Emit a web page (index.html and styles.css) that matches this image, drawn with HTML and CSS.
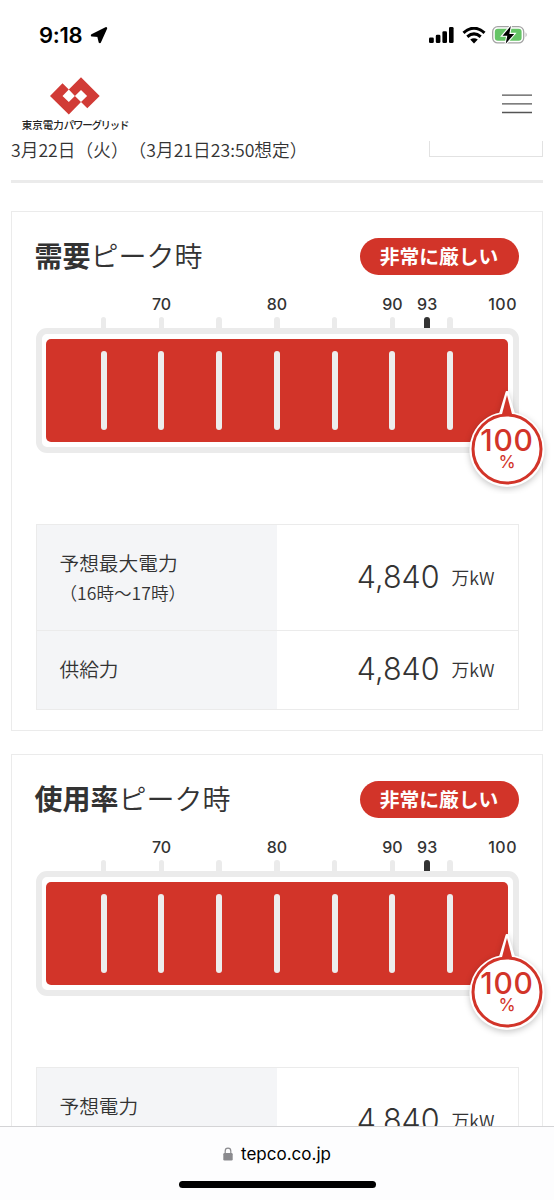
FILE: index.html
```html
<!DOCTYPE html>
<html lang="ja">
<head>
  <meta charset="UTF-8" />
  <meta name="viewport" content="width=device-width, initial-scale=1.0" />
  <title>東京電力パワーグリッド</title>
  <link rel="stylesheet" href="styles.css">
</head>
<body>
  <div class="status">
    <span class="time">9:18</span>
    <svg class="arrow" width="18" height="18" viewBox="0 0 18 18"><path d="M2 9.300 16 2.200 9.800 16 8.300 9.800z" stroke="#000" stroke-width="2.400" stroke-linejoin="round"/></svg>
    <svg class="signal" width="25" height="17" viewBox="0 0 25 17">
      <rect x="0" y="10.500" width="4.800" height="5.500" rx="1.300"/>
      <rect x="6.800" y="7.700" width="4.600" height="8.300" rx="1.300"/>
      <rect x="13.400" y="4.200" width="4.600" height="11.800" rx="1.300"/>
      <rect x="20" y="0" width="4.600" height="16" rx="1.300"/>
    </svg>
    <svg class="wifi" width="24" height="17" viewBox="0 0 24 17">
      <path d="M1.500 5.800Q12-3.300 22.500 5.800M5.300 9.700Q12 4.100 18.700 9.700" fill="none" stroke="#000" stroke-width="3.100"/>
      <path d="M8.200 12.500Q12 9.900 15.800 12.500L12 16.500z"/>
    </svg>
    <svg class="battery" width="37" height="20" viewBox="0 0 37 20">
      <rect x=".7" y="1.700" width="31" height="16.200" rx="5" fill="none" stroke="#a4a4a4" stroke-width="1.300"/>
      <rect x="2.800" y="3.800" width="26.800" height="12" rx="3" fill="#65c466"/>
      <path d="M33.600 7.300q2 2.400 0 4.900z" fill="#a4a4a4"/>
      <path d="M18.800 1 10.500 10.700h4.800L13.700 18.800 22.200 8.900h-4.900z" stroke="#fff" stroke-width="2.200" paint-order="stroke"/>
    </svg>
  </div>

  <header class="header">
    <div class="logo">
      <svg width="50" height="38" viewBox="0 0 50 38">
        <path fill="#d13b36" fill-rule="evenodd" d="M0 19 12.500 6.300 18.800 12.500 31 .3 49.700 19 37.300 31.300 31 25.100 18.800 37.500zM18.800 12.500 12.500 19 18.800 25.100 24.900 19zM31 12.900 24.900 19 31 25.100 37.100 19z"/>
      </svg>
      <p class="logo-text"><span class="kanji">東京電力</span>パワーグリッド</p>
    </div>
    <svg class="menu" width="30" height="20" viewBox="0 0 30 20"><path d="M0 1.200h30M0 9.900h30M0 18.500h30" stroke="#555" stroke-width="1.300"/></svg>
  </header>

  <main class="content">
    <div class="date-row">
      <p>3月22日（火）（3月21日23:50想定）</p>
      <div class="select"></div>
    </div>

    <section class="card">
      <div class="card-head">
        <h2><b>需要</b>ピーク時</h2>
        <span class="pill">非常に厳しい</span>
      </div>
      <div class="scale labels">
        <span class="p70">70</span><span class="p80">80</span><span class="p90">90</span><span class="p93">93</span><span class="p100">100</span>
      </div>
      <div class="scale ticks">
        <i class="p65"></i><i class="p70"></i><i class="p75"></i><i class="p80"></i><i class="p85"></i><i class="p90"></i><i class="p93"></i><i class="p95"></i>
      </div>
      <div class="meter">
        <div class="bar scale">
          <i class="p65"></i><i class="p70"></i><i class="p75"></i><i class="p80"></i><i class="p85"></i><i class="p90"></i><i class="p95"></i>
        </div>
        <div class="balloon">
          <svg width="90" height="110" viewBox="0 0 90 110">
            <path class="halo" d="M45 8.500 38.500 30A36 36 0 1 0 51.500 30z"/>
            <path d="M45 11 39.500 32h11z" fill="#d23429"/>
            <circle cx="45" cy="65" r="34" fill="#fff" stroke="#d23429" stroke-width="3"/>
          </svg>
          <p class="rate">100<small>%</small></p>
        </div>
      </div>
      <dl class="table">
        <div class="row first">
          <dt>予想最大電力<small>（16時〜17時）</small></dt>
          <dd>4,840<small>万kW</small></dd>
        </div>
        <div class="row">
          <dt>供給力</dt>
          <dd>4,840<small>万kW</small></dd>
        </div>
      </dl>
    </section>

    <section class="card">
      <div class="card-head">
        <h2><b>使用率</b>ピーク時</h2>
        <span class="pill">非常に厳しい</span>
      </div>
      <div class="scale labels">
        <span class="p70">70</span><span class="p80">80</span><span class="p90">90</span><span class="p93">93</span><span class="p100">100</span>
      </div>
      <div class="scale ticks">
        <i class="p65"></i><i class="p70"></i><i class="p75"></i><i class="p80"></i><i class="p85"></i><i class="p90"></i><i class="p93"></i><i class="p95"></i>
      </div>
      <div class="meter">
        <div class="bar scale">
          <i class="p65"></i><i class="p70"></i><i class="p75"></i><i class="p80"></i><i class="p85"></i><i class="p90"></i><i class="p95"></i>
        </div>
        <div class="balloon">
          <svg width="90" height="110" viewBox="0 0 90 110">
            <path class="halo" d="M45 8.500 38.500 30A36 36 0 1 0 51.500 30z"/>
            <path d="M45 11 39.500 32h11z" fill="#d23429"/>
            <circle cx="45" cy="65" r="34" fill="#fff" stroke="#d23429" stroke-width="3"/>
          </svg>
          <p class="rate">100<small>%</small></p>
        </div>
      </div>
      <dl class="table">
        <div class="row first">
          <dt>予想電力</dt>
          <dd>4,840<small>万kW</small></dd>
        </div>
      </dl>
    </section>
  </main>

  <footer class="browser-bar">
    <p class="url">
      <svg width="10" height="14" viewBox="0 0 10 14"><path d="M2.200 7V4a2.800 2.800 0 0 1 5.600 0v3" fill="none" stroke="#8a8a8e" stroke-width="1.200"/><rect x=".3" y="6" width="9.400" height="7.500" rx="1.200" fill="#8a8a8e"/></svg>
      tepco.co.jp
    </p>
    <div class="home"></div>
  </footer>
</body>
</html>
```

FILE: styles.css
```css
* {
  box-sizing: border-box;
  margin: 0;
  padding: 0;
}

body {
  width: 554px;
  height: 1200px;
  overflow: hidden;
  display: flex;
  flex-direction: column;
  background: #fff;
  color: #333;
  font-family: "Noto Sans CJK JP", sans-serif;
  font-weight: 350;
  text-spacing-trim: space-all;
}

svg {
  display: block;
  flex: none;
}

/* status bar */
.status {
  height: 70px;
  flex: none;
  display: flex;
  align-items: center;
  padding: 0 25px 0 39px;
  color: #000;
}

.time {
  font: 600 22px/24px Inter, sans-serif;
  letter-spacing: -0.3px;
  width: 51px;
}

.signal {
  margin: 1px 0 0 auto;
}

.wifi {
  margin: 0 6px 0 8px;
}

/* header */
.header {
  height: 71px;
  flex: none;
  display: flex;
  justify-content: space-between;
  padding: 7px 22px 0 20px;
}

.logo {
  width: 110px;
  display: flex;
  flex-direction: column;
  align-items: center;
}

.logo-text {
  margin-top: 2px;
  font-size: 10.5px;
  line-height: 16px;
  font-weight: 500;
  color: #222;
  letter-spacing: -1.3px;
  white-space: nowrap;
}

.kanji {
  letter-spacing: 0;
}

.menu {
  margin-top: 17px;
}

/* content */
.content {
  flex: 1;
  min-height: 0;
  overflow: hidden;
  padding: 0 11px;
}

.date-row {
  display: flex;
  justify-content: space-between;
  height: 42px;
  border-bottom: 3px solid #ebebeb;
  margin-bottom: 28px;
  font-size: 17.700px;
  line-height: 16px;
}

.select {
  width: 114px;
  height: 16px;
  border: 1px solid #e2e2e2;
  border-top: 0;
}

.card {
  height: 520px;
  border: 1px solid #ebebeb;
  padding: 26px 23.5px 0;
  margin-bottom: 23px;
}

.card-head {
  display: flex;
  justify-content: space-between;
  height: 37px;
}

.card-head h2 {
  font-size: 28px;
  line-height: 35px;
  font-weight: 350;
  margin-left: -1px;
}

.card-head b {
  font-weight: 700;
}

.pill {
  width: 159px;
  height: 37px;
  border-radius: 19px;
  background: #d23429;
  color: #fff;
  font-size: 19.800px;
  line-height: 36px;
  font-weight: 700;
  text-align: center;
}

/* one column per percent, from 60 to 100 */
.scale {
  display: grid;
  grid-template-columns: repeat(40, 1fr);
}

.scale > * {
  grid-row: 1;
  justify-self: center;
}

.p65 { grid-column: 4 / 8; }
.p70 { grid-column: 9 / 13; }
.p75 { grid-column: 14 / 18; }
.p80 { grid-column: 19 / 23; }
.p85 { grid-column: 24 / 28; }
.p90 { grid-column: 29 / 33; }
.p93 { grid-column: 32 / 36; }
.p95 { grid-column: 34 / 38; }
.p100 { grid-column: 37 / 41; }

.labels {
  margin: 18px 10.5px 0;
  font: 500 16px/22px Inter, sans-serif;
}

.labels .p100 {
  justify-self: end;
  margin-right: -9px;
  letter-spacing: 0.5px;
}

.ticks {
  margin: 2px 10.5px 0;
}

.ticks i {
  width: 5.500px;
  height: 11px;
  border-radius: 3px 3px 0 0;
  background: #ebebeb;
}

.ticks .p93 {
  background: #333;
}

.meter {
  position: relative;
  height: 125px;
  border: 6px solid #ebebeb;
  border-radius: 11px;
  padding: 5px 4.5px;
}

.bar {
  height: 103px;
  border-radius: 5px;
  background: #d23429;
  padding: 12px 0;
}

.bar i {
  width: 6px;
  height: 79px;
  border-radius: 3px;
  background: #ededed;
}

.balloon {
  position: absolute;
  right: -39.5px;
  top: 50px;
  width: 90px;
}

.halo {
  fill: #fff;
  stroke: #fff;
  stroke-width: 3px;
  stroke-linejoin: round;
  filter: drop-shadow(0 2px 3px rgba(0, 0, 0, 0.22));
}

.rate {
  position: absolute;
  top: 43px;
  left: 0;
  width: 90px;
  text-align: center;
  color: #d23429;
  font: 500 30px/26px Inter, sans-serif;
  letter-spacing: 0.7px;
}

.rate small {
  display: block;
  font-size: 17.500px;
  line-height: 18px;
  font-weight: 400;
  letter-spacing: 0;
}

.table {
  margin-top: 71px;
  border: 1px solid #ebebeb;
}

.row {
  display: flex;
  height: 78px;
}

.row.first {
  height: 106px;
  border-bottom: 1px solid #ebebeb;
}

.row dt {
  width: 240px;
  padding: 23px 0 0 23px;
  background: #f4f5f7;
  font-size: 19.700px;
  line-height: 30px;
}

.row dt small {
  display: block;
  font-size: 17.600px;
  line-height: 29px;
}

.row dd {
  flex: 1;
  display: flex;
  justify-content: flex-end;
  align-items: center;
  gap: 12px;
  padding: 0 23px 2px 0;
  font: 300 30.500px/36px Inter, sans-serif;
}

.row dd small {
  font: 350 17.800px/24px "Noto Sans CJK JP", sans-serif;
}

/* browser bar */
.browser-bar {
  height: 74px;
  flex: none;
  border-top: 1px solid #d4d4d6;
  background: #fdfdfe;
  color: #000;
}

.url {
  display: flex;
  align-items: center;
  justify-content: center;
  gap: 8px;
  padding-top: 16px;
  font: 400 17px/22px Inter, sans-serif;
}

.home {
  width: 197px;
  height: 7px;
  margin: 16px auto 0;
  border-radius: 4px;
  background: #000;
}
```
